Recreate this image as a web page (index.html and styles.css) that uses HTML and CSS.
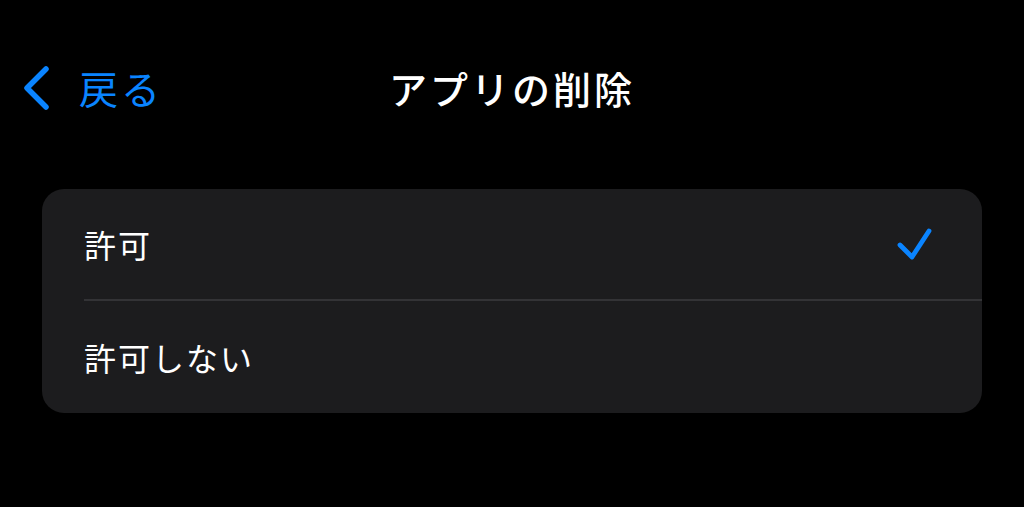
FILE: index.html
```html
<!DOCTYPE html>
<html lang="ja">
<head>
<meta charset="utf-8">
<link rel="stylesheet" href="styles.css">
</head>
<body>
<div class="screen">
  <header class="nav">
    <a class="back">
      <svg class="chev" width="30" height="48" viewBox="0 0 30 48"><path d="M26 5 L7 24 L26 43" fill="none" stroke="#0a84ff" stroke-width="5.5" stroke-linecap="round" stroke-linejoin="round"/></svg>
      <span class="back-label">戻る</span>
    </a>
    <h1 class="title">アプリの削除</h1>
  </header>
  <section class="card">
    <div class="row">
      <span class="label">許可</span>
      <svg class="check" width="40" height="36" viewBox="0 0 40 36"><path d="M5 17 L17 29 L34 3" fill="none" stroke="#0a84ff" stroke-width="4.8" stroke-linecap="round" stroke-linejoin="round"/></svg>
    </div>
    <div class="sep"></div>
    <div class="row">
      <span class="label">許可しない</span>
    </div>
  </section>
</div>
</body>
</html>
```
FILE: styles.css
```css
html, body {
  margin: 0;
  padding: 0;
  background: #000;
}
.screen {
  width: 1024px;
  height: 507px;
  background: #000;
  font-family: "Noto Sans CJK JP", "Noto Sans", sans-serif;
  color: #fff;
  overflow: hidden;
}
.nav {
  position: relative;
  height: 130px;
  display: flex;
  justify-content: center;
}
.back {
  position: absolute;
  left: 20px;
  top: 64px;
  display: flex;
  align-items: center;
  gap: 29px;
  color: #0a84ff;
}
.back-label {
  font-size: 39px;
  line-height: 48px;
  letter-spacing: 3px;
  margin-top: -2px;
}
.title {
  margin: 64px 0 0 0;
  font-size: 38px;
  font-weight: 500;
  line-height: 48px;
  letter-spacing: 3px;
  align-self: flex-start;
}
.card {
  margin: 59px 42px 0 42px;
  background: #1c1c1e;
  border-radius: 22px;
  padding-left: 42px;
}
.row {
  height: 110px;
  display: flex;
  align-items: center;
  justify-content: space-between;
  padding-right: 47px;
}
.row:last-child {
  height: 112px;
}
.label {
  font-size: 32px;
  line-height: 40px;
  letter-spacing: 2px;
}
.sep {
  height: 2px;
  background: #333336;
}
.check {
  display: block;
  margin-top: 3px;
}
```
